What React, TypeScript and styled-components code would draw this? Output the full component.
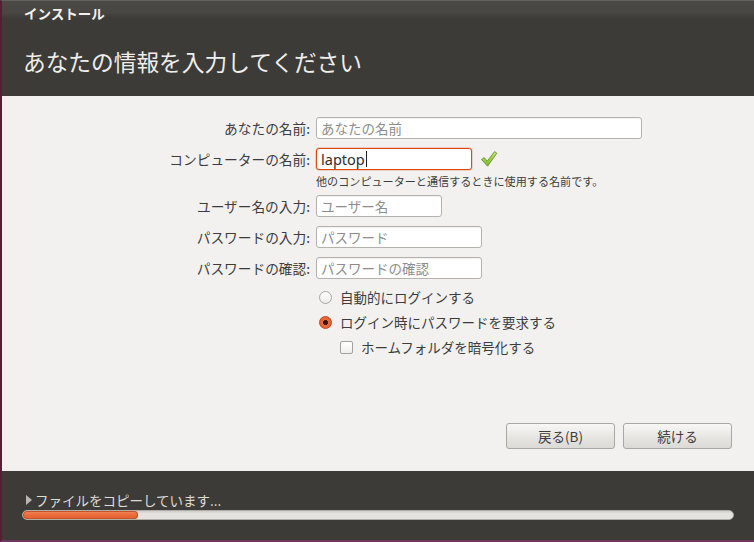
import React from "react";
import styled, { createGlobalStyle } from "styled-components";

const Global = createGlobalStyle`
  html, body { margin: 0; padding: 0; background: #3c3b37; }
  body { font-family: "Noto Sans CJK JP", "Noto Sans", sans-serif; }
  * { box-sizing: border-box; }
`;

const Window = styled.div`
  width: 754px;
  height: 542px;
  display: flex;
  flex-direction: column;
  border-left: 2px solid #5a1c35;
  border-bottom: 2px solid #6e3a5c;
  border-top: 1px solid #63625e;
  background: #3c3b37;
  overflow: hidden;
`;

const Header = styled.header`
  height: 95px;
  display: flex;
  flex-direction: column;
  background: linear-gradient(#4a4945 0px, #474642 12px, #3c3b37 17px, #3c3b37 100%);
`;

const TitleBar = styled.div`
  height: 29px;
  padding: 3px 0 0 22px;
  font-size: 13.5px;
  font-weight: bold;
  line-height: 18px;
  color: #f2f1ef;
`;

const Heading = styled.h1`
  margin: 0;
  padding: 17px 0 0 21px;
  font-size: 22.7px;
  font-weight: normal;
  line-height: 30px;
  color: #efeeec;
`;

const Body = styled.main`
  height: 375px;
  background: #f2f1f0;
  display: flex;
  flex-direction: column;
  padding-top: 21px;
`;

const Form = styled.div`
  display: flex;
  flex-direction: column;
`;

const Row = styled.div<{ $mt?: number }>`
  display: grid;
  grid-template-columns: 308px auto;
  column-gap: 6px;
  align-items: center;
  margin-top: ${(p) => p.$mt ?? 0}px;
`;

const Label = styled.label`
  text-align: right;
  font-size: 13.7px;
  color: #3c3c3c;
  line-height: 22px;
`;

const FieldWrap = styled.div`
  display: flex;
  align-items: center;
  gap: 8px;
`;

const Field = styled.div<{ $w: number; $focus?: boolean; $ph?: boolean }>`
  width: ${(p) => p.$w}px;
  height: 22px;
  border: 1px solid ${(p) => (p.$focus ? "#dd4814" : "#b5b2ad")};
  border-radius: 3px;
  background: #ffffff;
  box-shadow: ${(p) => (p.$focus ? "0 0 0 0.5px rgba(221,72,20,0.4)" : "inset 0 1px 1px rgba(0,0,0,0.06)")};
  padding: 0 4px;
  display: flex;
  align-items: center;
  font-size: ${(p) => (p.$ph ? "13.5px" : "14.5px")};
  font-family: ${(p) => (p.$ph ? `"Noto Sans CJK JP", sans-serif` : `"Noto Sans", "Noto Sans CJK JP", sans-serif`)};
  color: ${(p) => (p.$ph ? "#8e8d8a" : "#2e2e2e")};
  line-height: 20px;
`;

const Caret = styled.span`
  display: inline-block;
  width: 1px;
  height: 16px;
  background: #222;
  margin-left: 1px;
`;

const Hint = styled.div`
  grid-column: 2;
  font-size: 11.1px;
  line-height: 14px;
  color: #3c3c3c;
`;

const OptionRow = styled.div<{ $mt: number; $indent?: number }>`
  display: flex;
  align-items: center;
  gap: 8px;
  height: 20px;
  margin-top: ${(p) => p.$mt}px;
  padding-left: ${(p) => 316 + (p.$indent ?? 0)}px;
  font-size: 13.5px;
  color: #3c3c3c;
`;

const Radio = styled.span<{ $checked?: boolean }>`
  width: 13px;
  height: 13px;
  border-radius: 50%;
  flex: none;
  margin-left: 1px;
  border: 1px solid ${(p) => (p.$checked ? "#b7451d" : "#a9a7a3")};
  background: ${(p) =>
    p.$checked
      ? "radial-gradient(circle at 50% 50%, #3c1a12 0, #3c1a12 2.2px, #ec6a3c 2.8px, #e55c2c 100%)"
      : "linear-gradient(#ffffff, #ecebe9)"};
`;

const Check = styled.span`
  width: 13px;
  height: 13px;
  flex: none;
  border: 1px solid #a3a19d;
  border-radius: 2px;
  background: linear-gradient(#ffffff, #f0efed);
`;

const Spacer = styled.div`
  flex: 1;
`;

const Buttons = styled.div`
  display: flex;
  justify-content: flex-end;
  gap: 8px;
  padding-right: 22px;
  margin-bottom: 22px;
`;

const Button = styled.button`
  width: 109px;
  height: 26px;
  border: 1px solid #a9a7a2;
  border-radius: 3px;
  background: linear-gradient(#f8f7f6, #e6e4e1 60%, #dcdad6);
  font-family: "Noto Sans CJK JP", sans-serif;
  font-size: 13.5px;
  color: #3c3c3c;
  padding: 0;
`;

const Footer = styled.footer`
  flex: 1;
  background: #3c3b37;
  padding: 20px 18px 0 20px;
  display: flex;
  flex-direction: column;
`;

const Status = styled.div`
  display: flex;
  align-items: center;
  gap: 2px;
  font-size: 13.5px;
  line-height: 18px;
  color: #dfdcd7;
`;

const Arrow = styled.span`
  width: 0;
  height: 0;
  margin: 0 1px 0 4px;
  border-top: 5px solid transparent;
  border-bottom: 5px solid transparent;
  border-left: 6px solid #b9b7b2;
`;

const Track = styled.div`
  margin-top: 1px;
  height: 10px;
  width: 712px;
  border-radius: 5px;
  background: linear-gradient(#cfcdc9, #e3e2df 30%, #e4e3e0);
  border: 1px solid #b0aea9;
  overflow: hidden;
`;

const Fill = styled.div`
  height: 100%;
  border-radius: 5px;
  background: linear-gradient(#f28a5e, #ea6b3b 50%, #e0622f);
  box-shadow: inset 0 0 0 1px #c75426;
`;

function CheckMark() {
  return (
    <svg width="18" height="18" viewBox="0 0 18 18">
      <defs>
        <linearGradient id="gck" x1="0" y1="0" x2="0" y2="1">
          <stop offset="0" stopColor="#c4e67a" />
          <stop offset="1" stopColor="#7cb52a" />
        </linearGradient>
      </defs>
      <path
        d="M1.5 9.5 L4.2 7.6 L7.2 11.2 L14.6 1.6 L16.8 3.2 L7.6 16.2 Z"
        fill="url(#gck)"
        stroke="#64961f"
        strokeWidth="0.9"
        strokeLinejoin="round"
      />
    </svg>
  );
}

export default function App() {
  return (
    <>
      <Global />
      <Window>
        <Header>
          <TitleBar>インストール</TitleBar>
          <Heading>あなたの情報を入力してください</Heading>
        </Header>
        <Body>
          <Form>
            <Row>
              <Label>あなたの名前:</Label>
              <Field $w={326} $ph>あなたの名前</Field>
            </Row>
            <Row $mt={9}>
              <Label>コンピューターの名前:</Label>
              <FieldWrap>
                <Field $w={156} $focus>
                  laptop<Caret />
                </Field>
                <CheckMark />
              </FieldWrap>
            </Row>
            <Row $mt={4}>
              <Hint>他のコンピューターと通信するときに使用する名前です。</Hint>
            </Row>
            <Row $mt={7}>
              <Label>ユーザー名の入力:</Label>
              <Field $w={126} $ph>ユーザー名</Field>
            </Row>
            <Row $mt={9}>
              <Label>パスワードの入力:</Label>
              <Field $w={166} $ph>パスワード</Field>
            </Row>
            <Row $mt={9}>
              <Label>パスワードの確認:</Label>
              <Field $w={166} $ph>パスワードの確認</Field>
            </Row>
            <OptionRow $mt={8}>
              <Radio />
              自動的にログインする
            </OptionRow>
            <OptionRow $mt={5}>
              <Radio $checked />
              ログイン時にパスワードを要求する
            </OptionRow>
            <OptionRow $mt={5} $indent={22}>
              <Check />
              ホームフォルダを暗号化する
            </OptionRow>
          </Form>
          <Spacer />
          <Buttons>
            <Button>戻る(B)</Button>
            <Button>続ける</Button>
          </Buttons>
        </Body>
        <Footer>
          <Status>
            <Arrow />
            ファイルをコピーしています...
          </Status>
          <Track>
            <Fill style={{ width: `${(115 / 712) * 100}%` }} />
          </Track>
        </Footer>
      </Window>
    </>
  );
}
